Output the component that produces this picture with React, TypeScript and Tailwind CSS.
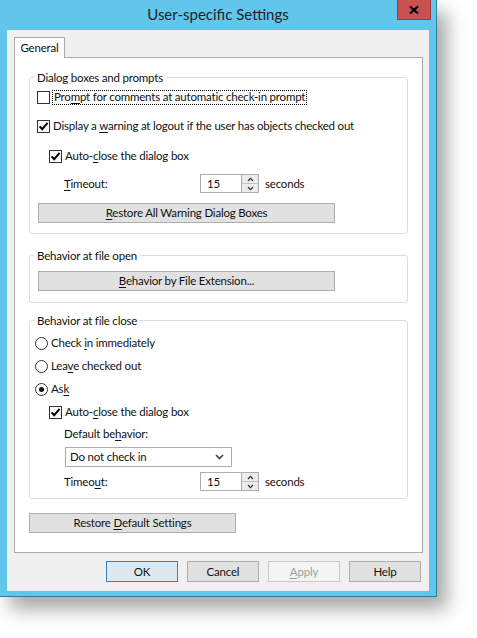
import React from "react";

const U = ({ children }: { children: React.ReactNode }) => (
  <span className="underline underline-offset-[2px] decoration-[1px]">{children}</span>
);

function CheckBox({ checked }: { checked: boolean }) {
  return (
    <span className="w-[13px] h-[13px] border border-[#333333] bg-white flex items-center justify-center shrink-0">
      {checked && (
        <svg width="11" height="11" viewBox="0 0 11 11">
          <path d="M1.6 5.4 L4.2 8.2 L9.6 1.8" fill="none" stroke="#000" strokeWidth="2" />
        </svg>
      )}
    </span>
  );
}

function Radio({ checked }: { checked: boolean }) {
  return (
    <span className="w-[13px] h-[13px] rounded-full border border-[#333333] bg-white flex items-center justify-center shrink-0">
      {checked && <span className="w-[5px] h-[5px] rounded-full bg-[#111]" />}
    </span>
  );
}

function Chev({ up }: { up?: boolean }) {
  return (
    <svg width="7" height="5" viewBox="0 0 7 5">
      <path d={up ? "M1 4 L3.5 1.3 L6 4" : "M1 1 L3.5 3.7 L6 1"} fill="none" stroke="#333" strokeWidth="1.2" />
    </svg>
  );
}

function Spin({ value }: { value: string }) {
  return (
    <div className="flex h-[19px] w-[59px] border border-[#abadb3] bg-white">
      <div className="flex-1 pl-[6px] flex items-center">{value}</div>
      <div className="w-[17px] flex flex-col border-l border-[#abadb3]">
        <div className="flex-1 bg-[#ececec] border-b border-[#c3c3c3] flex items-center justify-center">
          <Chev up />
        </div>
        <div className="flex-1 bg-[#ececec] flex items-center justify-center">
          <Chev />
        </div>
      </div>
    </div>
  );
}

function Btn({ children, className }: { children: React.ReactNode; className?: string }) {
  return (
    <div
      className={
        "h-[20px] bg-[#e1e1e1] border border-[#adadad] flex items-center justify-center " + (className ?? "")
      }
    >
      {children}
    </div>
  );
}

function Group({ title, className, children }: { title: string; className?: string; children: React.ReactNode }) {
  return (
    <div className={"relative ml-[14px] w-[379px] border border-[#dcdcdc] rounded-[3px] " + (className ?? "")}>
      <span className="absolute -top-[8px] left-[4px] bg-white px-[3px] leading-[15px]">{title}</span>
      {children}
    </div>
  );
}

export default function App() {
  return (
    <div className="w-[477px] h-[638px] bg-white text-[11.5px] tracking-[-0.2px] leading-none text-[#111] font-['Lato','Noto_Sans','Liberation_Sans',sans-serif]">
      <div className="w-[437px] h-[597px] bg-[#62c6ec] border-r border-b border-[#2c7fa6] shadow-[10px_12px_18px_rgba(0,0,0,0.35)] flex flex-col">
        {/* Title bar */}
        <div className="relative h-[30px] flex items-center justify-center">
          <span className="text-[15px] tracking-normal text-[#1f1f1f] -mt-[1px]">User-specific Settings</span>
          <div className="absolute right-[5px] top-0 w-[34px] h-[20px] bg-[#c75050] border-x border-b border-[#9e3b3b] flex items-center justify-center">
            <svg width="10" height="8" viewBox="0 0 10 8">
              <path d="M1 0.5 L9 7.5 M9 0.5 L1 7.5" stroke="#000" strokeWidth="2.2" />
            </svg>
          </div>
        </div>

        {/* Client area */}
        <div className="ml-[7px] w-[422px] h-[561px] bg-[#f0f0f0] flex flex-col">
          {/* Tab header */}
          <div className="pt-[7px] pl-[7px] flex">
            <div className="relative z-10 w-[51px] h-[21px] -mb-[1px] bg-white border-l border-t border-r border-[#acacac] flex items-center justify-center">
              General
            </div>
          </div>

          {/* Tab panel */}
          <div className="ml-[7px] w-[409px] h-[496px] bg-white border border-[#acacac] flex flex-col">
            {/* Group 1 */}
            <Group title="Dialog boxes and prompts" className="mt-[19px] pt-[10px] pb-[10px]">
              <div className="h-[18px] pl-[7px] flex items-center gap-[2px]">
                <CheckBox checked={false} />
                <span className="border border-dotted border-black px-[1px] h-[15px] flex items-center">
                  Pro<U>m</U>pt for comments at automatic check-in prompt
                </span>
              </div>
              <div className="mt-[11px] h-[18px] pl-[7px] flex items-center gap-[3px]">
                <CheckBox checked />
                <span>
                  Display a <U>w</U>arning at logout if the user has objects checked out
                </span>
              </div>
              <div className="mt-[12px] h-[18px] pl-[19px] flex items-center gap-[3px]">
                <CheckBox checked />
                <span>
                  Auto-<U>c</U>lose the dialog box
                </span>
              </div>
              <div className="mt-[9px] h-[19px] pl-[34px] flex items-center">
                <span className="w-[136px]">
                  <U>T</U>imeout:
                </span>
                <Spin value="15" />
                <span className="ml-[6px]">seconds</span>
              </div>
              <Btn className="mt-[10px] ml-[8px] w-[297px]">
                <span>
                  <U>R</U>estore All Warning Dialog Boxes
                </span>
              </Btn>
            </Group>

            {/* Group 2 */}
            <Group title="Behavior at file open" className="mt-[21px] pt-[15px] pb-[11px]">
              <Btn className="ml-[8px] w-[297px]">
                <span>
                  <U>B</U>ehavior by File Extension...
                </span>
              </Btn>
            </Group>

            {/* Group 3 */}
            <Group title="Behavior at file close" className="mt-[17px] pt-[13px] pb-[7px]">
              <div className="h-[18px] pl-[5px] flex items-center gap-[3px]">
                <Radio checked={false} />
                <span>
                  Check <U>i</U>n immediately
                </span>
              </div>
              <div className="mt-[5px] h-[18px] pl-[5px] flex items-center gap-[3px]">
                <Radio checked={false} />
                <span>
                  Lea<U>v</U>e checked out
                </span>
              </div>
              <div className="mt-[5px] h-[18px] pl-[5px] flex items-center gap-[3px]">
                <Radio checked />
                <span>
                  As<U>k</U>
                </span>
              </div>
              <div className="mt-[5px] h-[18px] pl-[19px] flex items-center gap-[3px]">
                <CheckBox checked />
                <span>
                  Auto-<U>c</U>lose the dialog box
                </span>
              </div>
              <div className="mt-[4px] h-[18px] pl-[34px] flex items-center">
                <span>
                  Default be<U>h</U>avior:
                </span>
              </div>
              <div className="mt-[4px] ml-[35px] w-[167px] h-[20px] border border-[#acacac] bg-white flex items-center justify-between pl-[4px] pr-[7px]">
                <span>Do not check in</span>
                <svg width="9" height="6" viewBox="0 0 9 6">
                  <path d="M1 1 L4.5 4.6 L8 1" fill="none" stroke="#444" strokeWidth="1.5" />
                </svg>
              </div>
              <div className="mt-[5px] h-[19px] pl-[34px] flex items-center">
                <span className="w-[136px]">
                  Timeo<U>u</U>t:
                </span>
                <Spin value="15" />
                <span className="ml-[6px]">seconds</span>
              </div>
            </Group>

            <Btn className="mt-[14px] ml-[14px] w-[207px]">
              <span>
                Restore <U>D</U>efault Settings
              </span>
            </Btn>
          </div>

          {/* Footer buttons */}
          <div className="mt-[8px] pr-[8px] flex justify-end gap-[9px]">
            <div className="w-[72px] h-[21px] bg-[#dfe7ef] border border-[#3c7fb1] flex items-center justify-center">
              OK
            </div>
            <div className="w-[72px] h-[21px] bg-[#e1e1e1] border border-[#adadad] flex items-center justify-center">
              Cancel
            </div>
            <div className="w-[72px] h-[21px] bg-[#f4f4f4] border border-[#c8c8c8] text-[#9d9d9d] flex items-center justify-center">
              <span>
                <U>A</U>pply
              </span>
            </div>
            <div className="w-[72px] h-[21px] bg-[#e1e1e1] border border-[#adadad] flex items-center justify-center">
              Help
            </div>
          </div>
        </div>
      </div>
    </div>
  );
}
